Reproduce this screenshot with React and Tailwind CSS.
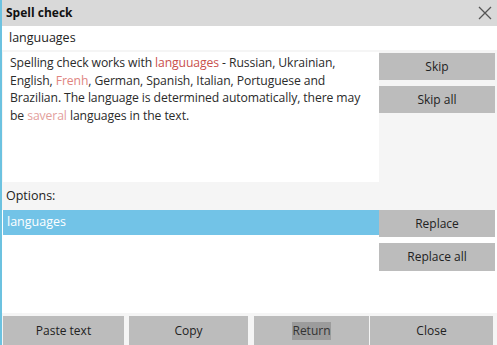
import React from 'react';

function Btn({ children, className = '' }) {
  return (
    <div className={`flex items-center justify-center bg-[#bcbcbc] text-[12px] text-[#222] ${className}`}>
      {children}
    </div>
  );
}

export default function App() {
  return (
    <div
      className="w-[497px] h-[345px] bg-[#f5f5f5] border-l-2 border-[#6cc2e0] flex flex-col overflow-hidden text-[#2b2b2b]"
      style={{ fontFamily: '"Open Sans", "Noto Sans", sans-serif' }}
    >
      <div className="h-[26px] bg-[#d9d9d9] flex items-center justify-between pl-[4px] pr-[4px]">
        <span className="text-[12px] font-bold text-[#111]">Spell check</span>
        <svg width="14" height="14" viewBox="0 0 14 14" className="mr-[1px]">
          <path d="M1 1 L13 13 M13 1 L1 13" stroke="#555" strokeWidth="1.3" fill="none" />
        </svg>
      </div>
      <div className="h-[24px] bg-white flex items-center pl-[7px] text-[12.5px] text-[#222]">languuages</div>
      <div className="h-[2px]" />
      <div className="flex pl-px">
        <div className="w-[376px] h-[130px] bg-white pl-[7px] pr-1 pt-[2px] text-[12.2px] leading-[17.5px] tracking-[-0.1px] text-[#2b2b2b]">
          Spelling check works with <span className="text-[#c9504d]">languuages</span> - Russian, Ukrainian,
          English, <span className="text-[#e0857f]">Frenh</span>, German, Spanish, Italian, Portuguese and
          Brazilian. The language is determined automatically, there may be{' '}
          <span className="text-[#e3a09c]">saveral</span> languages in the text.
        </div>
        <div className="w-[116px] flex flex-col gap-[6px] pt-px">
          <Btn className="h-[27px]">Skip</Btn>
          <Btn className="h-[27px]">Skip all</Btn>
        </div>
      </div>
      <div className="h-[28px] flex items-center pl-[4px] text-[12.5px] text-[#222]">Options:</div>
      <div className="flex h-[103px] bg-white pl-px">
        <div className="w-[376px]">
          <div className="h-[25px] bg-[#72c3e7] text-white text-[12.5px] flex items-center pl-[4px]">languages</div>
        </div>
        <div className="w-[116px] flex flex-col gap-[6px]">
          <Btn className="h-[27px]">Replace</Btn>
          <Btn className="h-[28px]">Replace all</Btn>
        </div>
      </div>
      <div className="h-[3px]" />
      <div className="flex h-[29px] pl-px">
        <Btn className="w-[121px]">Paste text</Btn>
        <Btn className="w-[119px] ml-[5px]">Copy</Btn>
        <Btn className="w-[115px] ml-[6px]">
          <span className="bg-[#9c9c9c] text-[#333]">Return</span>
        </Btn>
        <Btn className="w-[123px] ml-px">Close</Btn>
      </div>
    </div>
  );
}
